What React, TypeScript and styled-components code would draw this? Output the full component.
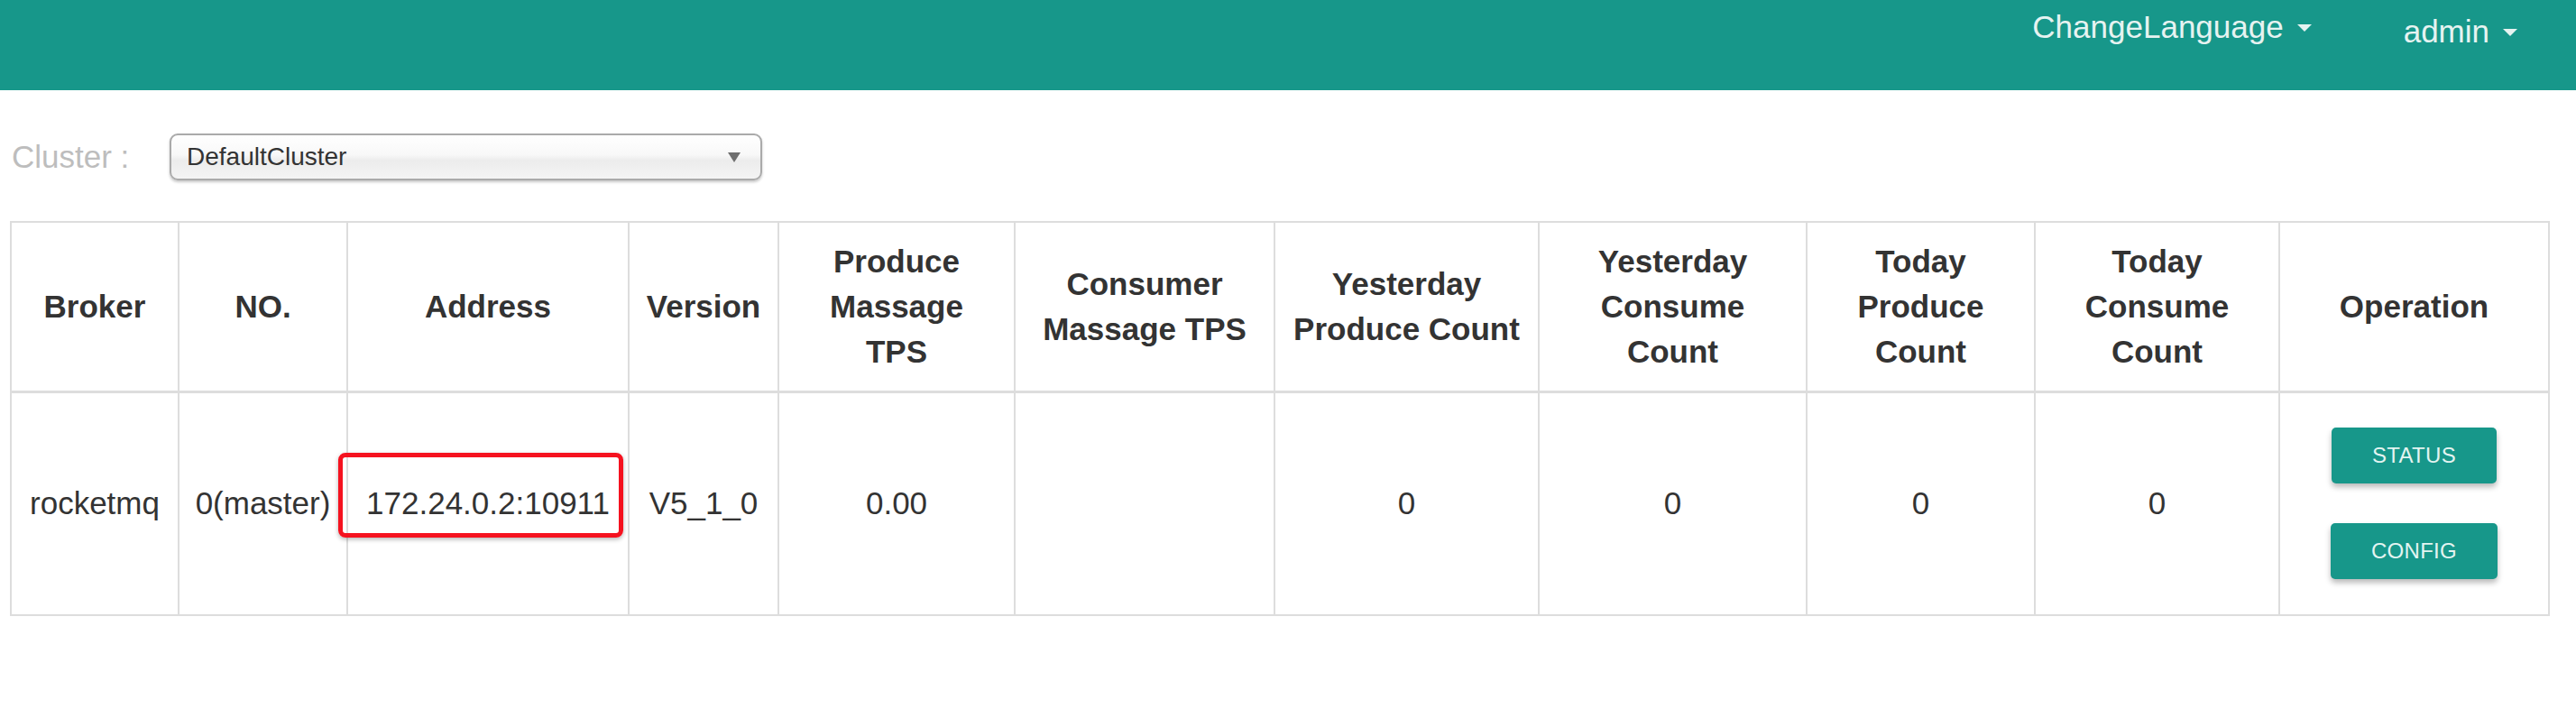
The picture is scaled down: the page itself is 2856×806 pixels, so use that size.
import React from 'react';
import styled, { createGlobalStyle } from 'styled-components';

const teal = '#17978a';

const GlobalStyle = createGlobalStyle`
  html, body {
    margin: 0;
    padding: 0;
    background: #fff;
    font-family: 'Liberation Sans', Arial, Helvetica, sans-serif;
    color: #333;
  }
`;

const TopBar = styled.header`
  height: 100px;
  background: ${teal};
  display: flex;
  justify-content: flex-end;
  align-items: flex-start;
  gap: 102px;
  padding-right: 65px;
`;

const NavItem = styled.div<{ $top: number }>`
  display: flex;
  align-items: center;
  padding-top: ${(p) => p.$top}px;
  font-size: 35px;
  line-height: 41px;
  color: #e6f3f1;
  cursor: pointer;
`;

const Caret = styled.span`
  display: inline-block;
  margin-left: 15px;
  margin-top: 2px;
  width: 0;
  height: 0;
  border-top: 8px solid #e6f3f1;
  border-left: 8px solid transparent;
  border-right: 8px solid transparent;
`;

const Content = styled.main`
  padding: 0 11px;
`;

const ClusterRow = styled.div`
  display: flex;
  align-items: center;
  margin-top: 48px;
  height: 52px;
  padding-left: 2px;
`;

const ClusterLabel = styled.label`
  font-size: 35px;
  color: #bdbdbd;
  width: 175px;
`;

const FakeSelect = styled.div`
  box-sizing: border-box;
  width: 657px;
  height: 52px;
  display: flex;
  align-items: center;
  justify-content: space-between;
  padding: 0 22px 0 17px;
  border: 2px solid #aaaaaa;
  border-radius: 9px;
  background: linear-gradient(to bottom, #ffffff 0%, #f8f8f8 45%, #ececec 58%, #f4f4f4 100%);
  box-shadow: 0 2px 3px rgba(0, 0, 0, 0.22);
  font-size: 28px;
  color: #333;
`;

const SelectArrow = styled.span`
  width: 0;
  height: 0;
  border-top: 11px solid #6f6f6f;
  border-left: 7px solid transparent;
  border-right: 7px solid transparent;
`;

const BrokerTable = styled.table`
  margin-top: 45px;
  width: 2814px;
  border-collapse: collapse;
  border: 2px solid #dddddd;
  table-layout: fixed;
`;

const HeadCell = styled.th<{ $w: number }>`
  width: ${(p) => p.$w}px;
  height: 188px;
  box-sizing: border-box;
  padding: 0 8px;
  border: 2px solid #dddddd;
  border-bottom-width: 3px;
  font-size: 35px;
  line-height: 50px;
  font-weight: bold;
  color: #333;
  text-align: center;
  vertical-align: middle;
  white-space: nowrap;
`;

const Cell = styled.td`
  position: relative;
  height: 248px;
  box-sizing: border-box;
  padding: 0 4px;
  border: 2px solid #dddddd;
  font-size: 35px;
  line-height: 50px;
  color: #333;
  text-align: center;
  vertical-align: middle;
  white-space: nowrap;
`;

const Highlight = styled.span`
  position: absolute;
  left: -11px;
  top: 66px;
  width: 316px;
  height: 94px;
  box-sizing: border-box;
  border: 5px solid #f5121f;
  border-radius: 8px;
  box-shadow: 0 2px 5px rgba(0, 0, 0, 0.3);
  pointer-events: none;
`;

const ButtonStack = styled.div`
  display: flex;
  flex-direction: column;
  align-items: center;
  gap: 44px;
`;

const ActionButton = styled.button`
  height: 62px;
  padding: 0 45px;
  border: none;
  border-radius: 5px;
  background: ${teal};
  color: #e3f4f1;
  font-family: 'Liberation Sans', Arial, sans-serif;
  font-size: 24px;
  letter-spacing: 0.3px;
  box-shadow: 0 4px 6px rgba(0, 0, 0, 0.28);
  cursor: pointer;
`;

const columns: { lines: string[]; w: number }[] = [
  { lines: ['Broker'], w: 186 },
  { lines: ['NO.'], w: 187 },
  { lines: ['Address'], w: 312 },
  { lines: ['Version'], w: 166 },
  { lines: ['Produce', 'Massage', 'TPS'], w: 262 },
  { lines: ['Consumer', 'Massage TPS'], w: 288 },
  { lines: ['Yesterday', 'Produce Count'], w: 293 },
  { lines: ['Yesterday', 'Consume', 'Count'], w: 297 },
  { lines: ['Today', 'Produce', 'Count'], w: 253 },
  { lines: ['Today', 'Consume', 'Count'], w: 271 },
  { lines: ['Operation'], w: 299 },
];

const App: React.FC = () => {
  return (
    <>
      <GlobalStyle />
      <TopBar>
        <NavItem $top={9}>
          ChangeLanguage
          <Caret />
        </NavItem>
        <NavItem $top={14}>
          admin
          <Caret />
        </NavItem>
      </TopBar>
      <Content>
        <ClusterRow>
          <ClusterLabel>Cluster :</ClusterLabel>
          <FakeSelect>
            DefaultCluster
            <SelectArrow />
          </FakeSelect>
        </ClusterRow>
        <BrokerTable>
          <thead>
            <tr>
              {columns.map((c) => (
                <HeadCell key={c.lines.join(' ')} $w={c.w}>
                  {c.lines.map((l, i) => (
                    <React.Fragment key={l}>
                      {i > 0 && <br />}
                      {l}
                    </React.Fragment>
                  ))}
                </HeadCell>
              ))}
            </tr>
          </thead>
          <tbody>
            <tr>
              <Cell>rocketmq</Cell>
              <Cell>0(master)</Cell>
              <Cell>
                172.24.0.2:10911
                <Highlight />
              </Cell>
              <Cell>V5_1_0</Cell>
              <Cell>0.00</Cell>
              <Cell />
              <Cell>0</Cell>
              <Cell>0</Cell>
              <Cell>0</Cell>
              <Cell>0</Cell>
              <Cell>
                <ButtonStack>
                  <ActionButton>STATUS</ActionButton>
                  <ActionButton>CONFIG</ActionButton>
                </ButtonStack>
              </Cell>
            </tr>
          </tbody>
        </BrokerTable>
      </Content>
    </>
  );
};

export default App;
